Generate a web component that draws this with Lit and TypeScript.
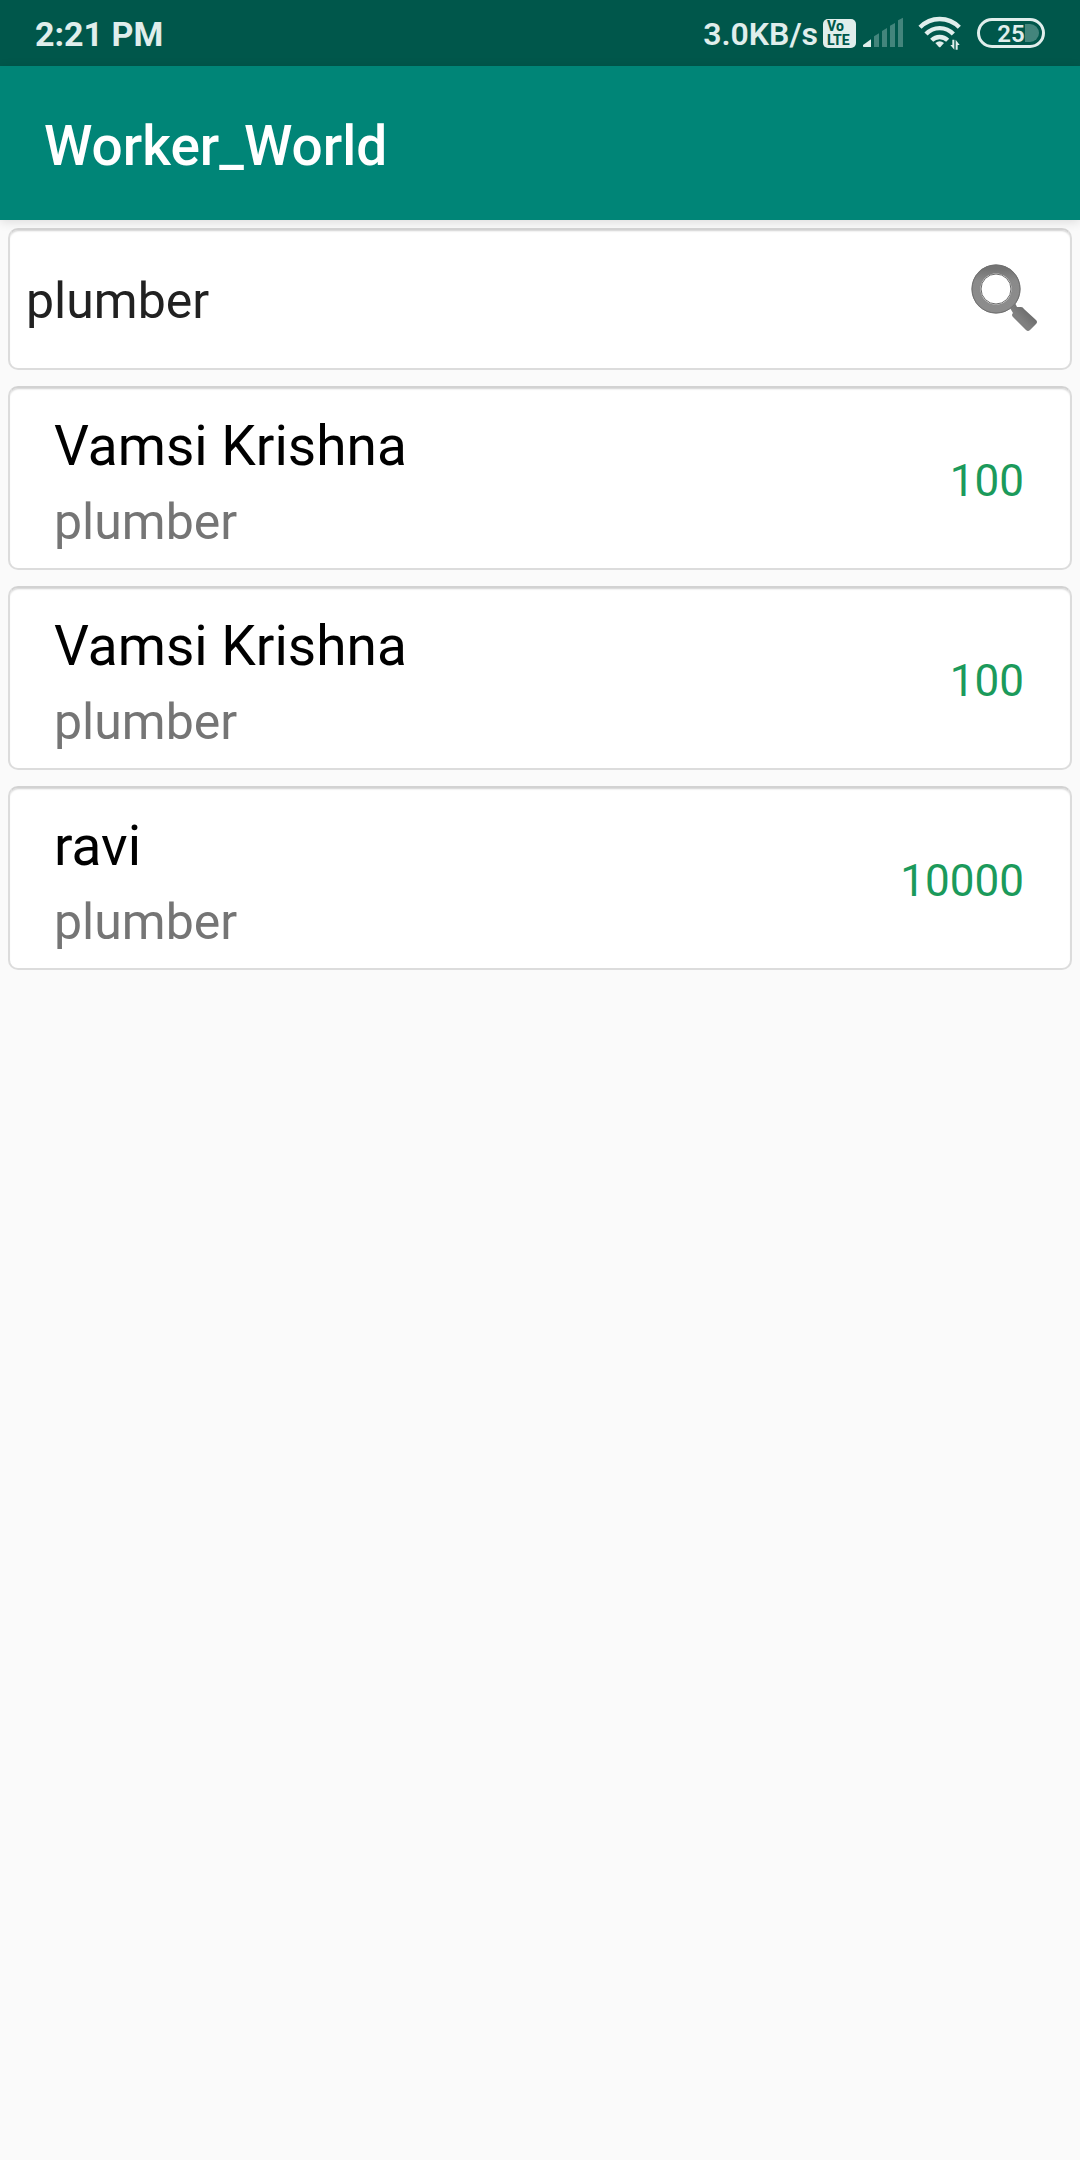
import { LitElement, html, css } from "lit";
import { customElement, property, state } from "lit/decorators.js";

interface Worker {
  name: string;
  trade: string;
  rate: number;
}

@customElement("status-bar")
class StatusBar extends LitElement {
  static styles = css`
    :host {
      display: block;
    }
    .bar {
      display: flex;
      align-items: center;
      justify-content: space-between;
      height: 66px;
      padding: 0 35px;
      background: #00574b;
      color: #e0eeec;
    }
    .clock {
      font-size: 34px;
      line-height: 40px;
      padding-top: 2px;
      font-weight: 700;
    }
    .icons {
      display: flex;
      align-items: center;
    }
    .speed {
      font-size: 32px;
      line-height: 40px;
      padding-top: 2px;
      margin-right: 5px;
      font-weight: 600;
    }
    .volte {
      box-sizing: border-box;
      display: flex;
      flex-direction: column;
      width: 33px;
      height: 29px;
      padding: 0 4px;
      border-radius: 5px;
      background: #e0eeec;
      color: #00574b;
      font-size: 14px;
      line-height: 14px;
      font-weight: 800;
    }
    .signal {
      margin-left: 6px;
    }
    .wifi {
      margin-left: 14px;
    }
    .battery {
      box-sizing: border-box;
      position: relative;
      display: flex;
      align-items: center;
      justify-content: center;
      width: 68px;
      height: 30px;
      margin-left: 15px;
      padding-top: 2px;
      border: 3px solid #e0eeec;
      border-radius: 15px;
      font-size: 24px;
      line-height: 24px;
      font-weight: 600;
    }
    .charge {
      position: absolute;
      top: 3px;
      right: 3px;
      bottom: 3px;
      width: 14px;
      border-radius: 0 9px 9px 0;
      background: #43857c;
    }
    .level {
      position: relative;
    }
    svg {
      display: block;
    }
  `;

  render() {
    return html`
      <div class="bar">
        <span class="clock">2:21 PM</span>
        <div class="icons">
          <span class="speed">3.0KB/s</span>
          <span class="volte"><span>Vo</span><span>LTE</span></span>
          <svg class="signal" width="42" height="32" viewBox="0 0 126 96" aria-hidden="true">
            <path fill="#e0eeec" d="M3 84 27 67V90H5Q2 90 3 84Z" />
            <path
              fill="#43857c"
              d="M36 58 51 49V90H36ZM60 42 75 33V90H60ZM84 26 99 18V90H84ZM108 10 123 2V90H108Z"
            />
          </svg>
          <svg class="wifi" width="44" height="34" viewBox="0 0 132 102" aria-hidden="true">
            <g fill="none" stroke="#e0eeec" stroke-width="13">
              <path d="M6 34A82 82 0 0 1 124 34" />
              <path d="M24 54A56 56 0 0 1 106 54" />
              <path d="M41 73A34 34 0 0 1 89 73" />
            </g>
            <path fill="#e0eeec" d="M52 81Q65 70 78 81L68 92Q65 95 62 92Z" />
            <path fill="#e0eeec" d="M103 71H109V101L97 87H103ZM113 71 125 87H119V101H113Z" />
          </svg>
          <span class="battery"><span class="charge"></span><span class="level">25</span></span>
        </div>
      </div>
    `;
  }
}

@customElement("worker-card")
class WorkerCard extends LitElement {
  @property({ attribute: false }) worker!: Worker;

  static styles = css`
    :host {
      display: block;
    }
    .card {
      box-sizing: border-box;
      display: flex;
      align-items: center;
      justify-content: space-between;
      padding: 22px 46px 17px 44px;
      border: 2px solid #dcdcdc;
      border-top-color: #d2d2d2;
      border-radius: 10px;
      background: #fff;
      box-shadow: inset 0 2px 2px -1px #d0d0d0;
    }
    .name {
      margin: 0;
      color: #000;
      font-size: 55px;
      line-height: 72px;
      font-weight: 400;
    }
    .trade {
      margin: 11px 0 0;
      color: #757575;
      font-size: 50px;
      line-height: 58px;
    }
    .rate {
      color: #1b9a5b;
      font-size: 44px;
      line-height: 52px;
    }
  `;

  render() {
    return html`
      <article class="card">
        <div>
          <h2 class="name">${this.worker.name}</h2>
          <p class="trade">${this.worker.trade}</p>
        </div>
        <span class="rate">${this.worker.rate}</span>
      </article>
    `;
  }
}

@customElement("app-root")
class AppRoot extends LitElement {
  @state() private query = "plumber";

  private workers: Worker[] = [
    { name: "Vamsi Krishna", trade: "plumber", rate: 100 },
    { name: "Vamsi Krishna", trade: "plumber", rate: 100 },
    { name: "ravi", trade: "plumber", rate: 10000 },
  ];

  static styles = css`
    :host {
      display: block;
      min-height: 100vh;
      background: #fafafa;
      font-family: Roboto, "Liberation Sans", sans-serif;
    }
    .title-bar {
      display: flex;
      align-items: center;
      height: 154px;
      padding: 0 44px;
      background: #008577;
      box-shadow: 0 2px 10px rgba(0, 0, 0, 0.12);
    }
    .title {
      margin: 0;
      padding-top: 6px;
      color: #fff;
      font-size: 55px;
      line-height: 64px;
      font-weight: 500;
    }
    .content {
      display: flex;
      flex-direction: column;
      gap: 16px;
      padding: 8px;
    }
    .search {
      box-sizing: border-box;
      position: relative;
      display: flex;
      align-items: center;
      padding: 34px 30px 34px 16px;
      border: 2px solid #dcdcdc;
      border-top-color: #d2d2d2;
      border-radius: 10px;
      background: #fff;
      box-shadow: inset 0 2px 2px -1px #d0d0d0;
    }
    .query {
      flex: 1;
      min-width: 0;
      padding: 4px 0 0;
      border: 0;
      outline: 0;
      background: none;
      color: #212121;
      font: 400 50px/64px Roboto, "Liberation Sans", sans-serif;
    }
    .go {
      padding: 0;
      border: 0;
      background: none;
      cursor: pointer;
    }
    .go svg {
      display: block;
    }
    .list {
      display: flex;
      flex-direction: column;
      gap: 16px;
      margin: 0;
      padding: 0;
      list-style: none;
    }
  `;

  render() {
    return html`
      <status-bar></status-bar>
      <header class="title-bar"><h1 class="title">Worker_World</h1></header>
      <main class="content">
        <form class="search" role="search" @submit=${(e: Event) => e.preventDefault()}>
          <input
            class="query"
            type="text"
            aria-label="Search workers"
            .value=${this.query}
            @input=${(e: Event) => (this.query = (e.target as HTMLInputElement).value)}
          />
          <button class="go" type="submit" aria-label="Search">
            <svg width="70" height="70" viewBox="0 0 70 70" aria-hidden="true">
              <defs>
                <linearGradient id="ring" x1="0" y1="0" x2="0" y2="1">
                  <stop offset="0" stop-color="#747474" />
                  <stop offset="0.3" stop-color="#8a8a8a" />
                  <stop offset="1" stop-color="#8c8c8c" />
                </linearGradient>
                <linearGradient id="grip" x1="1" y1="0" x2="0" y2="1">
                  <stop offset="0.2" stop-color="#666" />
                  <stop offset="0.6" stop-color="#808080" />
                </linearGradient>
              </defs>
              <path
                d="M40 44 45 39 47 43H51Q53 43 54 45L66 56Q68 58 66 60L60 66Q58 68 56 66L43 53Q41 51 43 49Z"
                fill="url(#grip)"
              />
              <circle cx="26" cy="25" r="20" fill="none" stroke="url(#ring)" stroke-width="9" />
              <circle cx="26" cy="25" r="24" fill="none" stroke="#707070" stroke-width="1" />
              <circle cx="26" cy="25" r="15" fill="none" stroke="#6a6a6a" stroke-width="1" />
            </svg>
          </button>
        </form>
        <ul class="list">
          ${this.workers.map((w) => html`<li><worker-card .worker=${w}></worker-card></li>`)}
        </ul>
      </main>
    `;
  }
}
